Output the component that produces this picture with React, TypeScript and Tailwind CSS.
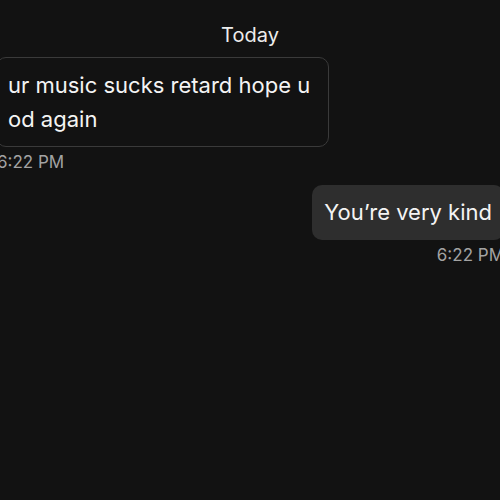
export default function App() {
  return (
    <div
      className="h-[500px] w-[500px] overflow-hidden bg-[#121212] text-white"
      style={{ fontFamily: 'Inter, "Noto Sans", sans-serif' }}
    >
      <div className="-ml-[4px] flex w-[508px] flex-col pt-[24px]">
        {/* Date header */}
        <div className="text-center text-[20px] leading-[22px] text-[#ececec]">Today</div>

        {/* Incoming */}
        <div className="mt-[11px] flex flex-col items-start">
          <div className="w-[333px] rounded-[10px] border border-[#3a3a3a] bg-[#121212] px-[11px] py-[10px] text-[22px] leading-[34px] text-[#f4f4f4]">
            ur music sucks retard hope u od again
          </div>
          <span className="mt-[5px] pl-[1px] text-[17px] leading-[20px] text-[#a3a3a3]">6:22 PM</span>
        </div>

        {/* Outgoing */}
        <div className="mt-[13px] flex flex-col items-end">
          <div className="rounded-[10px] bg-[#2e2e2e] px-[12px] py-[11px] text-[22px] leading-[33px] text-[#f4f4f4]">
            You’re very kind
          </div>
          <span className="mt-[5px] text-[17px] leading-[20px] text-[#a3a3a3]">6:22 PM</span>
        </div>
      </div>
    </div>
  )
}
